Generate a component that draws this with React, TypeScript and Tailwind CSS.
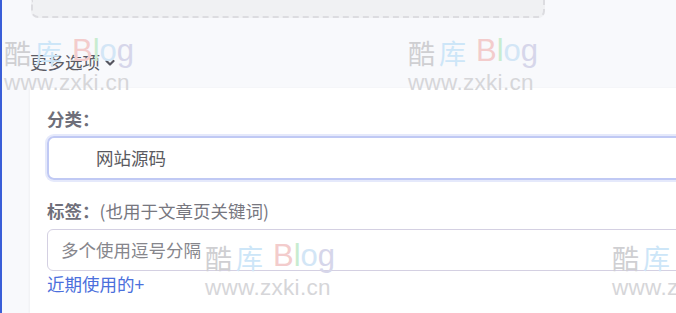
import React from "react";

const cjk = { fontFamily: '"Noto Sans CJK SC", "Noto Sans", sans-serif' };

function Watermark({ x, y }: { x: number; y: number }) {
  return (
    <div
      className="pointer-events-none absolute select-none"
      style={{ left: x, top: y }}
    >
      <div className="flex h-[32px] items-end leading-none">
        <span className="text-[27px] leading-none text-[#cfcfd2]" style={cjk}>
          酷
        </span>
        <span className="ml-[4px] text-[27px] leading-none text-[#cde6f8]" style={cjk}>
          库
        </span>
        <span
          className="ml-[10px] flex text-[31px] leading-none"
          style={{ fontFamily: '"Liberation Sans", Arial, sans-serif' }}
        >
          <span className="text-[#f3cccc]">B</span>
          <span className="text-[#c8ecd0]">l</span>
          <span className="text-[#d3e6f6]">o</span>
          <span className="text-[#d6d6ea]">g</span>
        </span>
      </div>
      <div
        className="mt-[6px] text-[22.5px] leading-none tracking-[0.3px] text-[#d6d6d9]"
        style={{ fontFamily: '"Liberation Sans", Arial, sans-serif' }}
      >
        www.zxki.cn
      </div>
    </div>
  );
}

export default function App() {
  return (
    <div
      className="relative flex h-[313px] w-[676px] overflow-hidden bg-[#f8f9fc] text-[17.5px]"
      style={cjk}
    >
      <div className="h-full w-[2px] shrink-0 bg-[#3a5ed8]" />
      <div className="flex min-w-0 flex-1 flex-col pl-[28px]">
        <div className="ml-[1px] h-[18px] w-[514px] shrink-0 rounded-b-[7px] border-2 border-t-0 border-dashed border-[#dcdce0] bg-[#f0f1f3]" />
        <div className="mt-[32px] flex h-[24px] items-center leading-[24px] text-[#5c5c66]">
          <span>更多选项</span>
          <svg
            width="10"
            height="8"
            viewBox="0 0 10 8"
            className="ml-[5px] mt-[1px]"
            fill="none"
          >
            <path
              d="M1.5 2 L5 5.5 L8.5 2"
              stroke="#55555f"
              strokeWidth="2.2"
              strokeLinecap="round"
              strokeLinejoin="round"
            />
          </svg>
        </div>
        <div className="mt-[14px] w-[700px] flex-1 bg-white pl-[17px] pt-[19px] shadow-[-1px_0_2px_rgba(0,0,0,0.04)]">
          <div className="h-[24px] font-bold leading-[24px] text-[#6f6f7a]">
            分类：
          </div>
          <div className="mt-[5px] flex h-[44px] items-center rounded-[7px] border-2 border-[#c0c9f4] pl-[47px] text-[#5a5a60] ring-2 ring-[#e5e9fb]">
            网站源码
          </div>
          <div className="mt-[19px] flex h-[24px] items-center leading-[24px]">
            <span className="font-bold text-[#6f6f7a]">标签：</span>
            <span className="text-[#77777f]">(也用于文章页关键词)</span>
          </div>
          <div className="mt-[6px] flex h-[42px] items-center rounded-[6px] border border-[#d4d0e2] pl-[13px] text-[#86868c]">
            多个使用逗号分隔
          </div>
          <div className="mt-[1px] h-[24px] leading-[24px] text-[#4b6fdc]">
            近期使用的+
          </div>
        </div>
      </div>
      <Watermark x={4} y={34} />
      <Watermark x={408} y={34} />
      <Watermark x={205} y={239} />
      <Watermark x={612} y={239} />
    </div>
  );
}
